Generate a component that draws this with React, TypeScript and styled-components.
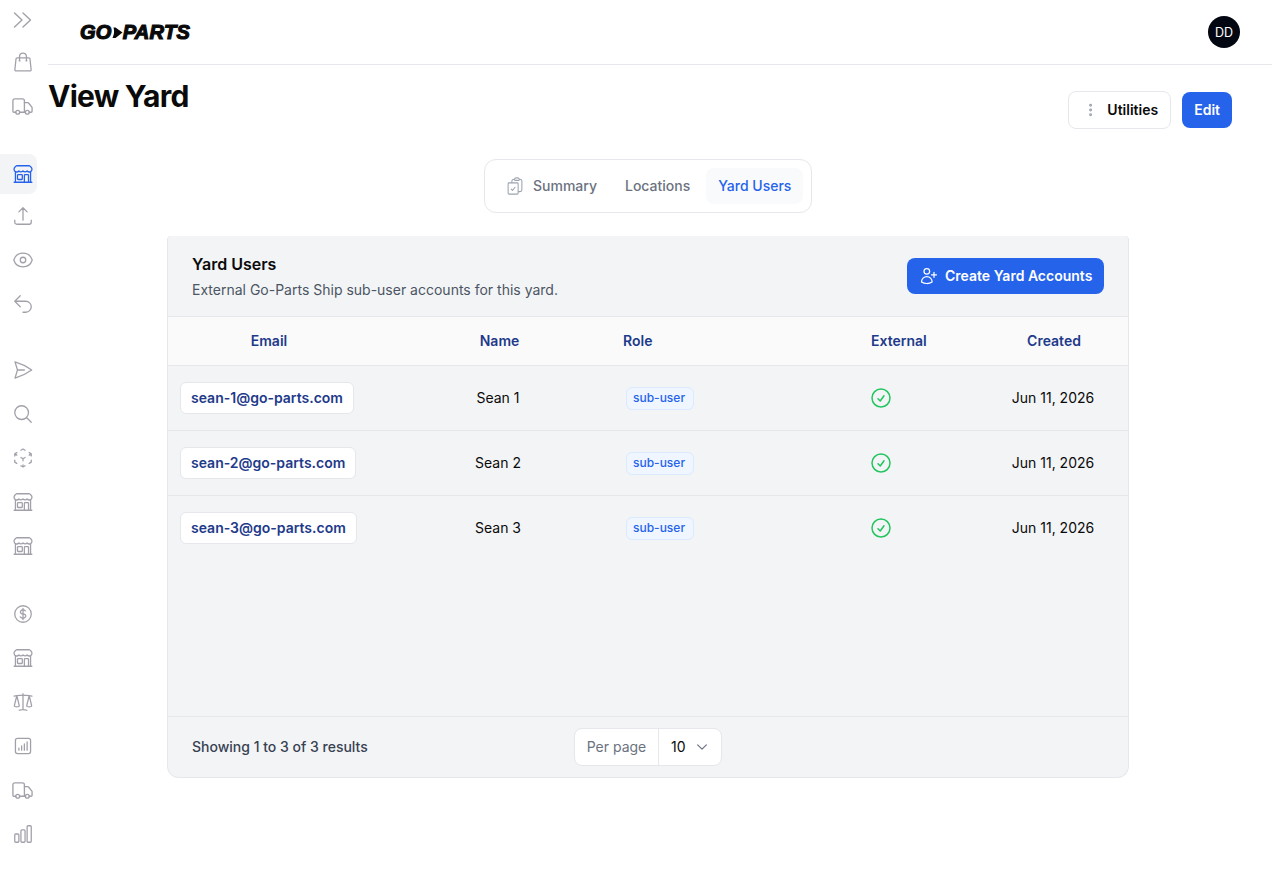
import React from "react";
import styled, { createGlobalStyle } from "styled-components";
import { Truck } from "lucide-react";
import {
  HiOutlineShoppingBag, HiOutlineBuildingStorefront,
  HiOutlineArrowUpTray, HiOutlineEye, HiOutlineArrowUturnLeft, HiOutlinePaperAirplane,
  HiOutlineMagnifyingGlass, HiOutlineCubeTransparent, HiOutlineCurrencyDollar, HiOutlineScale,
  HiOutlineChartBarSquare, HiOutlineChartBar, HiOutlineClipboardDocumentCheck, HiOutlineUserPlus,
  HiOutlineCheckCircle, HiOutlineEllipsisVertical, HiOutlineChevronDown,
} from "react-icons/hi2";

const Global = createGlobalStyle`
  html, body { margin: 0; padding: 0; background: #fff; }
  body { font-family: Inter, "Liberation Sans", sans-serif; color: #0a0a0a; overflow: hidden; }
  * { box-sizing: border-box; }
`;

const Shell = styled.div`display: flex; width: 1280px; height: 880px;`;
const Sidebar = styled.nav`width: 48px; flex: none; display: flex; flex-direction: column;`;
const NavGroup = styled.div<{ $mt?: number }>`display: flex; flex-direction: column; gap: 4px; margin-top: ${p => p.$mt ?? 0}px;`;
const NavItem = styled.div<{ $active?: boolean; $tight?: boolean }>`
  width: 37px; height: 40px; display: flex; align-items: center; justify-content: center;
  padding-left: 8px; border-radius: 0 8px 8px 0;
  margin-bottom: ${p => (p.$tight ? -2 : 0)}px;
  background: ${p => (p.$active ? "#f3f4f6" : "transparent")};
  color: ${p => (p.$active ? "#2563eb" : "#a1a1aa")};
  font-size: 22px;
  svg { stroke-width: 1.4; }
`;
const Main = styled.main`width: 1224px; flex: none; display: flex; flex-direction: column;`;
const TopBar = styled.header`height: 65px; border-bottom: 1px solid #e5e7eb; display: flex; align-items: center; justify-content: space-between; padding: 0 32px;`;
const Logo = styled.div`
  display: flex; align-items: center; font-family: "Liberation Sans", sans-serif; font-weight: 700; font-style: italic;
  font-size: 20px; letter-spacing: 0.3px; color: #0a0a0a; -webkit-text-stroke: 1.2px #0a0a0a; line-height: 20px;
`;
const Avatar = styled.div`width: 32px; height: 32px; border-radius: 50%; background: #030712; color: #fff; font-size: 12.5px; display: flex; align-items: center; justify-content: center;`;
const PageHead = styled.div`display: flex; justify-content: space-between; align-items: flex-start; width: 1200px; padding: 26px 16px 0 0; height: 94px;`;
const Title = styled.h1`margin: -13px 0 0; padding: 0; font-size: 30px; line-height: 36px; font-weight: 700; letter-spacing: -0.75px;`;
const Actions = styled.div`display: flex; align-items: center; gap: 11px;`;
const OutlineBtn = styled.button`
  height: 38px; width: 103px; padding: 0 12px; background: #fff; border: 1px solid #e5e7eb; border-radius: 8px; display: flex; align-items: center; gap: 7px;
  font: 600 14px/20px Inter, sans-serif; color: #0a0a0a; white-space: nowrap;
  svg { color: #9ca3af; font-size: 20px; stroke-width: 2.2; }
`;
const PrimaryBtn = styled.button`
  height: 36px; padding: 0 12px; background: #2563eb; border: 0; border-radius: 8px; display: flex; align-items: center; gap: 6px;
  font: 600 14px/20px Inter, sans-serif; color: #fff; white-space: nowrap;
  svg { font-size: 20px; flex: none; }
`;
const TabsWrap = styled.div`width: 1200px; display: flex; justify-content: center;`;
const Tabs = styled.div`display: flex; gap: 4px; padding: 8px; height: 54px; width: 328px; border: 1px solid #e5e7eb; border-radius: 12px; background: #fff;`;
const Tab = styled.div<{ $active?: boolean }>`
  display: flex; align-items: center; gap: 8px; padding: 0 12px 1px; border-radius: 8px; font-size: 14px; line-height: 20px; font-weight: 500; white-space: nowrap;
  color: ${p => (p.$active ? "#2563eb" : "#6b7280")}; background: ${p => (p.$active ? "#f9fafb" : "transparent")};
  svg { color: #9ca3af; font-size: 20px; stroke-width: 1.25; }
`;
const CardWrap = styled.div`width: 1200px; display: flex; justify-content: center; margin-top: 23px;`;
const Card = styled.section`width: 962px; height: 542px; background: #f3f4f6; border: 1px solid #e5e7eb; border-top: 0; border-radius: 4px 4px 12px 12px; display: flex; flex-direction: column;`;
const CardHead = styled.div`height: 81px; padding: 16px 24px 0; display: flex; justify-content: space-between; align-items: flex-start; border-bottom: 1px solid #e5e7eb;`;
const CardTitle = styled.div`font-size: 16px; line-height: 24px; font-weight: 600; color: #0a0a0a;`;
const CardSub = styled.div`font-size: 14px; line-height: 20px; color: #4b5563; margin-top: 4px;`;
const CreateBtn = styled(PrimaryBtn)`margin-top: 6px; width: 197px; justify-content: flex-start;`;
const cols = "202px 241px 248px 121px 148px";
const HeadRow = styled.div`display: grid; grid-template-columns: ${cols}; height: 49px; padding-bottom: 1px; background: #fafafa; border-bottom: 1px solid #e5e7eb; align-items: center; font-size: 14px; line-height: 20px; font-weight: 600; color: #1e3a8a;`;
const Rows = styled.div`display: flex; flex-direction: column; height: 350px;`;
const Row = styled.div`display: grid; grid-template-columns: ${cols}; flex: none; height: 65px; border-bottom: 1px solid #e5e7eb; align-items: center; font-size: 14px; line-height: 20px; color: #0a0a0a; &:last-child { border-bottom-color: transparent; }`;
const CellCenter = styled.div<{ $pl?: number; $pr?: number; $pb?: number }>`display: flex; justify-content: center; padding-left: ${p => p.$pl ?? 0}px; padding-right: ${p => p.$pr ?? 0}px; padding-bottom: ${p => p.$pb ?? 0}px;`;
const CellLeft = styled.div<{ $pl?: number }>`display: flex; justify-content: flex-start; padding-left: ${p => p.$pl ?? 12}px;`;
const EmailPill = styled.div`height: 32px; padding: 0 10px 1px; background: #fff; border: 1px solid #e5e7eb; border-radius: 6px; display: flex; align-items: center; font-weight: 600; color: #1e3a8a;`;
const RoleBadge = styled.div`height: 23px; padding: 0 8px 1px 6px; background: #eff6ff; border: 1px solid #dbeafe; border-radius: 6px; display: flex; align-items: center; font-size: 12px; font-weight: 500; color: #2563eb;`;
const CheckIcon = styled(HiOutlineCheckCircle)`font-size: 24px; color: #22c55e; display: block; stroke-width: 1.5;`;
const Footer = styled.div`flex: 1; border-top: 1px solid #e5e7eb; display: grid; grid-template-columns: 382px 148px; padding: 0 0 0 24px; align-items: center;`;
const Results = styled.div`font-size: 14px; line-height: 20px; font-weight: 500; color: #374151;`;
const PerPage = styled.div`height: 38px; width: 148px; display: flex; align-items: center; background: #fff; border: 1px solid #e5e7eb; border-radius: 8px; font-size: 14px; line-height: 20px;`;
const PerLabel = styled.div`height: 100%; width: 84px; flex: none; display: flex; align-items: center; justify-content: center; color: #6b7280; border-right: 1px solid #e5e7eb;`;
const PerValue = styled.div`flex: 1; display: flex; align-items: center; justify-content: space-between; padding: 0 12px; color: #0a0a0a; svg { color: #6b7280; font-size: 14px; stroke-width: 2; }`;

const users = [1, 2, 3];

const DoubleChevron = () => (
  <svg width="20" height="16" viewBox="0 0 20 16" fill="none" stroke="currentColor" strokeWidth="1.5" strokeLinecap="round" strokeLinejoin="round" aria-hidden="true">
    <path d="M1.5 1 L9 8 L1.5 15" />
    <path d="M10 1 L17.5 8 L10 15" />
  </svg>
);

const LogoMark = () => (
  <svg width="11" height="13" viewBox="0 0 11 13" aria-hidden="true">
    <path d="M1.5 1.5 H3.5 L10.5 6.5 L3.5 12 H0.5 Q3 6.5 1.5 1.5 Z" fill="#0a0a0a" />
  </svg>
);

export default function App() {
  return (
    <Shell>
      <Global />
      <Sidebar>
        <NavGroup>
          <NavItem $tight><DoubleChevron /></NavItem>
          <NavItem><HiOutlineShoppingBag /></NavItem>
          <NavItem><Truck size={23} /></NavItem>
        </NavGroup>
        <NavGroup $mt={28}>
          <NavItem $active $tight><HiOutlineBuildingStorefront /></NavItem>
          <NavItem><HiOutlineArrowUpTray /></NavItem>
          <NavItem><HiOutlineEye /></NavItem>
          <NavItem><HiOutlineArrowUturnLeft /></NavItem>
        </NavGroup>
        <NavGroup $mt={26}>
          <NavItem><HiOutlinePaperAirplane /></NavItem>
          <NavItem><HiOutlineMagnifyingGlass /></NavItem>
          <NavItem><HiOutlineCubeTransparent /></NavItem>
          <NavItem><HiOutlineBuildingStorefront /></NavItem>
          <NavItem><HiOutlineBuildingStorefront /></NavItem>
        </NavGroup>
        <NavGroup $mt={28}>
          <NavItem><HiOutlineCurrencyDollar /></NavItem>
          <NavItem><HiOutlineBuildingStorefront /></NavItem>
          <NavItem><HiOutlineScale /></NavItem>
          <NavItem><HiOutlineChartBarSquare /></NavItem>
          <NavItem><Truck size={23} /></NavItem>
          <NavItem><HiOutlineChartBar /></NavItem>
        </NavGroup>
      </Sidebar>
      <Main>
        <TopBar>
          <Logo>
            GO
            <LogoMark />
            PARTS
          </Logo>
          <Avatar>DD</Avatar>
        </TopBar>
        <PageHead>
          <Title>View Yard</Title>
          <Actions>
            <OutlineBtn><HiOutlineEllipsisVertical />Utilities</OutlineBtn>
            <PrimaryBtn>Edit</PrimaryBtn>
          </Actions>
        </PageHead>
        <TabsWrap>
          <Tabs>
            <Tab><HiOutlineClipboardDocumentCheck />Summary</Tab>
            <Tab>Locations</Tab>
            <Tab $active>Yard Users</Tab>
          </Tabs>
        </TabsWrap>
        <CardWrap>
          <Card>
            <CardHead>
              <div>
                <CardTitle>Yard Users</CardTitle>
                <CardSub>External Go-Parts Ship sub-user accounts for this yard.</CardSub>
              </div>
              <CreateBtn><HiOutlineUserPlus />Create Yard Accounts</CreateBtn>
            </CardHead>
            <HeadRow>
              <CellCenter>Email</CellCenter>
              <CellCenter $pl={18}>Name</CellCenter>
              <CellLeft>Role</CellLeft>
              <CellLeft>External</CellLeft>
              <CellCenter>Created</CellCenter>
            </HeadRow>
            <Rows>
              {users.map(n => (
                <Row key={n}>
                  <CellLeft>
                    <EmailPill>{`sean-${n}@go-parts.com`}</EmailPill>
                  </CellLeft>
                  <CellCenter $pl={15} $pb={1}>{`Sean ${n}`}</CellCenter>
                  <CellLeft $pl={15}><RoleBadge>sub-user</RoleBadge></CellLeft>
                  <CellLeft $pl={10}><CheckIcon /></CellLeft>
                  <CellCenter $pr={2} $pb={1}>Jun 11, 2026</CellCenter>
                </Row>
              ))}
            </Rows>
            <Footer>
              <Results>Showing 1 to 3 of 3 results</Results>
              <PerPage>
                <PerLabel>Per page</PerLabel>
                <PerValue>10<HiOutlineChevronDown /></PerValue>
              </PerPage>
            </Footer>
          </Card>
        </CardWrap>
      </Main>
    </Shell>
  );
}
